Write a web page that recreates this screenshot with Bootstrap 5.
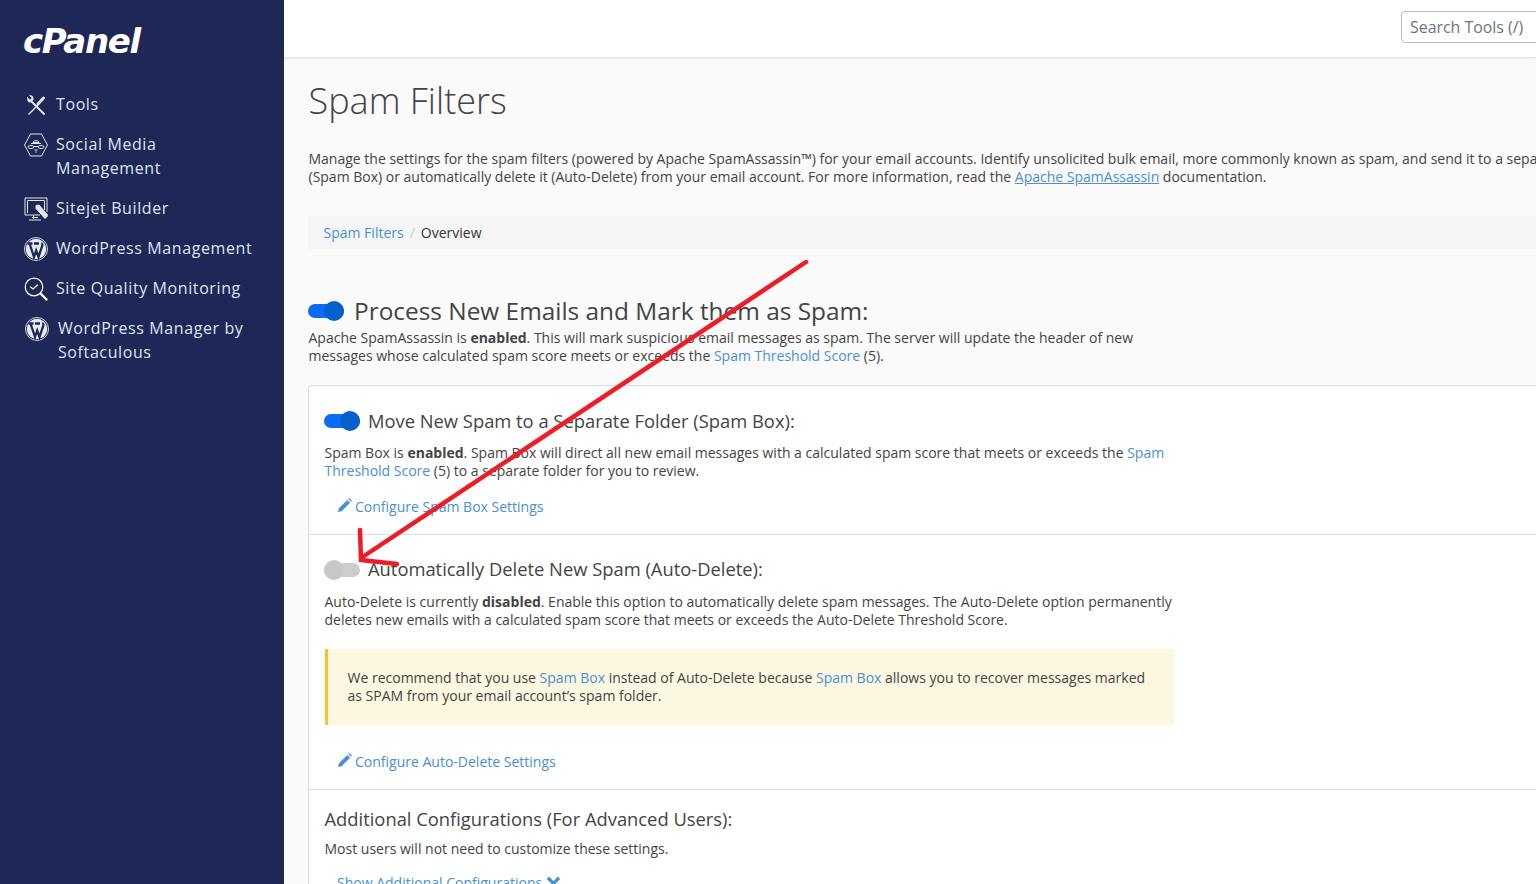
<!DOCTYPE html>
<html lang="en">
<head>
<meta charset="utf-8">
<title>Spam Filters</title>
<link rel="stylesheet" href="https://cdn.jsdelivr.net/npm/bootstrap@5.3.0/dist/css/bootstrap.min.css">
<style>
html,body{height:884px;overflow:hidden}
body{font-family:"Open Sans",sans-serif;font-size:14px;line-height:18px;color:#444;background:#fafafa}
a{color:#4a90d2}
.cp-shell{width:1536px;height:884px;overflow:hidden;position:relative}
.cp-side{width:284px;flex:0 0 284px;background:#1f2756;color:#d9e6f2;font-size:16px;line-height:24px;letter-spacing:.6px}
.cp-logo{height:92px;padding:19px 0 0 23px;font-family:"DejaVu Sans",sans-serif;font-weight:700;font-style:italic;font-size:34px;line-height:44px;color:#fff;letter-spacing:-1.3px}
.cp-item{padding:0 20px 16px 24px;display:flex;gap:8px}
.cp-item svg{flex:0 0 24px;width:24px;height:24px;margin-top:1px;margin-bottom:-1px}
.cp-item.shift{padding-left:25px;gap:9px}
.cp-main{width:1252px;flex:0 0 1252px;overflow:hidden}
.cp-top{height:57px;background:#fff;box-shadow:0 1px 3px rgba(0,0,0,.13);position:relative;overflow:hidden}
.cp-search{position:absolute;left:1117px;top:11px;width:200px;height:32px;border:1px solid #b9b9c5;border-radius:4px;padding:5px 8px;font-size:15.9px;line-height:20px;color:#6c757d;background:#fff}
.cp-body{padding:0 0 0 24px;width:1500px}
.cp-title{font-size:36px;font-weight:300;line-height:44px;margin:22px 0 0;padding-left:.5px;color:#444}
.cp-intro{margin:27px 0 0;width:1340px;padding-left:.5px}
.cp-crumbs{margin:30px 0 0;height:33px;background:#f5f5f5;padding:8px 15.5px;line-height:18px;display:flex;color:#333}
.cp-crumbs i{font-style:normal;color:#ccc;padding:0 6px}
.cp-h2{font-size:24.4px;line-height:30px;font-weight:400;margin:0;color:#444}
.cp-h3{font-size:18.35px;line-height:26px;font-weight:400;margin:0;color:#444}
.cp-sect{margin-top:47px}
.cp-lead{width:850px;margin:3px 0 0;padding-left:.5px}
.cp-panel{margin-top:20px;background:#fff;border:1px solid #ddd;border-radius:4px 0 0 0;border-right:0}
.cp-row{padding:22px 15px 18px 15.5px;border-bottom:1px solid #ddd}
.cp-row.second{padding-top:21px}
.cp-row.third{padding-top:16px;padding-bottom:10px;border-bottom:0}
.cp-row p{width:850px;margin:0}
.cp-head{display:flex;align-items:center;margin-bottom:10px}
.cp-row.second .cp-head{margin-bottom:11px}
.cp-tgl{width:36px;height:20px;flex:0 0 36px;position:relative;display:block;margin-right:10px}
.cp-head .cp-tgl{margin-right:8px;margin-left:-.5px}
.cp-tgl::before{content:"";position:absolute;left:0;top:3px;width:36px;height:14px;border-radius:7px;background:#0a6cf1}
.cp-tgl::after{content:"";position:absolute;right:0;top:0;width:20px;height:20px;border-radius:50%;background:#0460cc}
.cp-tgl.off::before{background:#ccc;top:4px}
.cp-tgl.off::after{right:auto;left:0;top:1px;background:#c8c8c8}
.cp-link{display:block;margin:18px 0 0 12.5px;text-decoration:none;line-height:18px}
.cp-link.far{margin-top:28px}
.cp-link.near{margin-top:16px}
.cp-link svg{width:15px;height:15px;vertical-align:-1px;margin-right:3px}
.cp-note{width:849px;margin-top:20px;background:#fcf7e1;border-left:3px solid #fbbf2b;padding:20px;height:76px}
.cp-arrow{position:absolute;left:0;top:0;width:1536px;height:884px;pointer-events:none}
</style>
</head>
<body>
<div class="cp-shell d-flex">
  <nav class="cp-side">
    <div class="cp-logo">cPanel</div>
    <div class="cp-item"><svg viewBox="0 0 24 24" fill="none" stroke="#dfe6ef" stroke-linecap="round"><path d="M8 9 20 21" stroke-width="2"/><path d="M3.500 4.500 6 7l2-2-2.500-2.500C8 2 10 4 9 7L7 9C4 10 3 7 3.500 4.500z" fill="#dfe6ef" stroke-width=".6"/><path d="M5 21 14 12" stroke-width="1.500"/><path d="M14 11 19.500 5" stroke-width="3"/></svg><span>Tools</span></div>
    <div class="cp-item"><svg viewBox="0 0 24 24" fill="none" stroke="#dfe6ef" stroke-width="1"><path d="M6.500 1h11L23.500 12l-6 11h-11L.5 12z"/><path d="M9 9.500C9 7 15 7 15 9.500zM7 10.500h10"/><path d="M4 14c0-2 6-2 6 0s-6 2-6 0zM14 14c0-2 6-2 6 0s-6 2-6 0zM10 13.500h4M10.500 17h3M11.300 19h1.400"/></svg><span>Social Media<br>Management</span></div>
    <div class="cp-item"><svg viewBox="0 0 24 24" fill="none" stroke="#dfe6ef" stroke-width="1"><path d="M23 15V1H1v17h15M3.500 16V3.500h17V13M9.500 18v4M5 23h12M8 20.500h6"/><path d="M12 8.500 15 8l9 10.500-3 3-9-10z" fill="#dfe6ef"/></svg><span>Sitejet Builder</span></div>
    <div class="cp-item"><svg viewBox="0 0 24 24"><circle cx="12" cy="12" r="11.500" fill="none" stroke="#e6ebf2" stroke-width=".9"/><circle cx="12" cy="12" r="10.200" fill="#e6ebf2"/><path d="M5.500 6.500 10 20l2.200-6.500L14.500 20l3.700-11c.6-1.500-.4-2.500-1-2.500M3.500 6.500h5M10 6.500h5" fill="none" stroke="#1f2756" stroke-width="2.300"/></svg><span>WordPress Management</span></div>
    <div class="cp-item"><svg viewBox="0 0 24 24" fill="none" stroke="#fff" stroke-width="1.200"><circle cx="10" cy="10" r="8.800"/><path d="M6.500 10l2.500 2 4.500-4" stroke-linecap="round"/><path d="M16.500 16.500 22.500 22.500" stroke-width="2.400" stroke-linecap="round"/></svg><span>Site Quality Monitoring</span></div>
    <div class="cp-item shift"><svg viewBox="0 0 24 24"><circle cx="12" cy="12" r="11.500" fill="none" stroke="#e6ebf2" stroke-width=".9"/><circle cx="12" cy="12" r="10.200" fill="#e6ebf2"/><path d="M5.500 6.500 10 20l2.200-6.500L14.500 20l3.700-11c.6-1.500-.4-2.500-1-2.500M3.500 6.500h5M10 6.500h5" fill="none" stroke="#1f2756" stroke-width="2.300"/></svg><span>WordPress Manager by<br>Softaculous</span></div>
  </nav>
  <main class="cp-main">
    <div class="cp-top"><div class="cp-search">Search Tools (/)</div></div>
    <div class="cp-body">
      <h1 class="cp-title">Spam Filters</h1>
      <p class="cp-intro">Manage the settings for the spam filters (powered by Apache SpamAssassin™) for your email accounts. Identify unsolicited bulk email, more commonly known as spam, and send it to a separate folder (Spam Box) or automatically delete it (Auto-Delete) from your email account. For more information, read the <a href="#">Apache SpamAssassin</a> documentation.</p>
      <div class="cp-crumbs"><a href="#" class="text-decoration-none">Spam Filters</a><i>/</i><span>Overview</span></div>
      <section class="cp-sect">
        <div class="d-flex align-items-center"><span class="cp-tgl"></span><h2 class="cp-h2">Process New Emails and Mark them as Spam:</h2></div>
        <p class="cp-lead">Apache SpamAssassin is <b>enabled</b>. This will mark suspicious email messages as spam. The server will update the header of new messages whose calculated spam score meets or exceeds the <a href="#" class="text-decoration-none">Spam Threshold Score</a> (5).</p>
      </section>
      <div class="cp-panel">
        <div class="cp-row">
          <div class="cp-head"><span class="cp-tgl"></span><h3 class="cp-h3">Move New Spam to a Separate Folder (Spam Box):</h3></div>
          <p>Spam Box is <b>enabled</b>. Spam Box will direct all new email messages with a calculated spam score that meets or exceeds the <a href="#" class="text-decoration-none">Spam Threshold Score</a> (5) to a separate folder for you to review.</p>
          <a href="#" class="cp-link"><svg viewBox="0 0 16 16" fill="#4a90d2"><path d="M1 15l1-4L11 2l3 3-9 9zM12 1l1-1 3 3-1 1z"/></svg>Configure Spam Box Settings</a>
        </div>
        <div class="cp-row second">
          <div class="cp-head"><span class="cp-tgl off"></span><h3 class="cp-h3">Automatically Delete New Spam (Auto-Delete):</h3></div>
          <p>Auto-Delete is currently <b>disabled</b>. Enable this option to automatically delete spam messages. The Auto-Delete option permanently deletes new emails with a calculated spam score that meets or exceeds the Auto-Delete Threshold Score.</p>
          <div class="cp-note">We recommend that you use <a href="#" class="text-decoration-none">Spam Box</a> instead of Auto-Delete because <a href="#" class="text-decoration-none">Spam Box</a> allows you to recover messages marked as SPAM from your email account’s spam folder.</div>
          <a href="#" class="cp-link far"><svg viewBox="0 0 16 16" fill="#4a90d2"><path d="M1 15l1-4L11 2l3 3-9 9zM12 1l1-1 3 3-1 1z"/></svg>Configure Auto-Delete Settings</a>
        </div>
        <div class="cp-row third">
          <h3 class="cp-h3 mb-2">Additional Configurations (For Advanced Users):</h3>
          <p>Most users will not need to customize these settings.</p>
          <a href="#" class="cp-link near">Show Additional Configurations <svg viewBox="0 0 16 16" fill="none" stroke="#4a90d2" stroke-width="3.500"><path d="M2 4l6 6 6-6"/></svg></a>
        </div>
      </div>
    </div>
  </main>
  <svg class="cp-arrow" viewBox="0 0 1536 884" fill="none" stroke="#ee1c25" stroke-width="4.500" stroke-linecap="round"><path d="M806 262 361 558M360 530l1 30 36 4"/></svg>
</div>
<script src="https://cdn.jsdelivr.net/npm/bootstrap@5.3.0/dist/js/bootstrap.bundle.min.js"></script>
</body>
</html>
